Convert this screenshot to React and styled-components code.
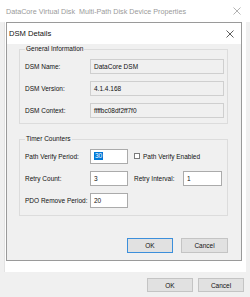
import styled, { createGlobalStyle } from "styled-components";

const GlobalStyle = createGlobalStyle`
    html, body {
        margin: 0;
        padding: 0;
        background: #f0f0f0;
    }
    * {
        box-sizing: border-box;
    }
`;

const Window = styled.div`
    width: 250px;
    height: 297px;
    display: flex;
    flex-direction: column;
    background: #f0f0f0;
    font-family: "Liberation Sans", Arial, sans-serif;
    font-size: 6.5px;
    color: #111;
    overflow: hidden;
`;

const TitleBar = styled.div`
    height: 22px;
    flex: none;
    display: flex;
    align-items: center;
    justify-content: space-between;
    background: #fff;
    padding: 0 9px 0 6px;
    color: ${(p) => (p.$inactive ? "#9a9a9a" : "#111")};
    font-size: ${(p) => (p.$inactive ? "7.2px" : "7.6px")};
`;

const DialogTitle = styled(TitleBar)`
    height: 21px;
    padding: 0 7px 0 2px;
`;

const Sheet = styled.div`
    margin: 0 4px 0 4px;
    padding: 0 4px 11px 1px;
    background: #fff;
    border-left: 1px solid #e3e3e3;
`;

const Dialog = styled.div`
    height: 239px;
    display: flex;
    flex-direction: column;
    border: 1px solid #9a9a9a;
    background: #f0f0f0;
`;

const DialogBody = styled.div`
    flex: 1;
    display: flex;
    flex-direction: column;
    padding: 1px 13px 0 12px;
`;

const Group = styled.fieldset`
    margin: 0 0 ${(p) => p.$gap || 0}px 0;
    border: 1px solid #dcdcdc;
    padding: 2px 5px ${(p) => p.$bottom}px 5px;
    min-width: 0;
`;

const Legend = styled.legend`
    padding: 0 1px;
    line-height: 8px;
`;

const Row = styled.div`
    height: 22px;
    display: flex;
    align-items: center;
`;

const Label = styled.span`
    width: ${(p) => p.$w || 65}px;
    margin-left: ${(p) => p.$indent || 0}px;
    flex: none;
    white-space: nowrap;
`;

const Field = styled.div`
    width: ${(p) => p.$w}px;
    height: 15px;
    flex: none;
    display: flex;
    align-items: center;
    padding-left: 3px;
    background: ${(p) => (p.$readOnly ? "#f0f0f0" : "#fff")};
    border: 1px solid ${(p) => (p.$readOnly ? "#cfcfcf" : "#ababab")};
    white-space: nowrap;
`;

const Selected = styled.span`
    background: #0078d7;
    color: #fff;
    padding: 0 1px;
    line-height: 8px;
`;

const CheckLabel = styled.label`
    display: flex;
    align-items: center;
    gap: 3px;
    margin-left: 6px;
    white-space: nowrap;
`;

const Check = styled.span`
    width: 6px;
    height: 6px;
    border: 1px solid #7a7a7a;
    background: #fff;
`;

const ButtonRow = styled.div`
    display: flex;
    justify-content: flex-end;
    gap: ${(p) => p.$gap}px;
    margin-top: ${(p) => p.$top}px;
    padding-right: ${(p) => p.$right}px;
`;

const Button = styled.button`
    width: ${(p) => p.$w || 46}px;
    height: ${(p) => p.$h || 15}px;
    padding: 0;
    font-family: inherit;
    font-size: 6.5px;
    color: #111;
    background: #e1e1e1;
    border: 1px solid ${(p) => (p.$default ? "#3c8fdb" : "#c4c4c4")};
`;

const Footer = styled.div`
    flex: 1;
`;

function CloseIcon({ color }) {
    return (
        <svg width="8" height="8" viewBox="0 0 8 8">
            <path d="M0.5 0.5 L7.5 7.5 M7.5 0.5 L0.5 7.5" stroke={color} strokeWidth="0.8" fill="none" />
        </svg>
    );
}

export default function App() {
    return (
        <>
            <GlobalStyle />
            <Window>
                <TitleBar $inactive>
                    <span>DataCore Virtual Disk&nbsp;&nbsp;Multi-Path Disk Device Properties</span>
                    <CloseIcon color="#a0a0a0" />
                </TitleBar>
                <Sheet>
                    <Dialog>
                        <DialogTitle>
                            <span>DSM Details</span>
                            <CloseIcon color="#333" />
                        </DialogTitle>
                        <DialogBody>
                            <Group $gap={11} $bottom={2}>
                                <Legend>General Information</Legend>
                                <Row>
                                    <Label>DSM Name:</Label>
                                    <Field $readOnly $w={134}>DataCore DSM</Field>
                                </Row>
                                <Row>
                                    <Label>DSM Version:</Label>
                                    <Field $readOnly $w={134}>4.1.4.168</Field>
                                </Row>
                                <Row>
                                    <Label>DSM Context:</Label>
                                    <Field $readOnly $w={134}>ffffbc08df2ff7f0</Field>
                                </Row>
                            </Group>
                            <Group $bottom={4}>
                                <Legend>Timer Counters</Legend>
                                <Row>
                                    <Label>Path Verify Period:</Label>
                                    <Field $w={38}><Selected>30</Selected></Field>
                                    <CheckLabel>
                                        <Check />
                                        Path Verify Enabled
                                    </CheckLabel>
                                </Row>
                                <Row>
                                    <Label>Retry Count:</Label>
                                    <Field $w={38}>3</Field>
                                    <Label $w={49} $indent={6}>Retry Interval:</Label>
                                    <Field $w={39}>1</Field>
                                </Row>
                                <Row>
                                    <Label>PDO Remove Period:</Label>
                                    <Field $w={38}>20</Field>
                                </Row>
                            </Group>
                            <ButtonRow $gap={8} $top={22} $right={-4}>
                                <Button $default>OK</Button>
                                <Button $w={47}>Cancel</Button>
                            </ButtonRow>
                        </DialogBody>
                    </Dialog>
                </Sheet>
                <Footer>
                    <ButtonRow $gap={5} $top={6} $right={6}>
                        <Button $h={14}>OK</Button>
                        <Button $h={14}>Cancel</Button>
                    </ButtonRow>
                </Footer>
            </Window>
        </>
    );
}
